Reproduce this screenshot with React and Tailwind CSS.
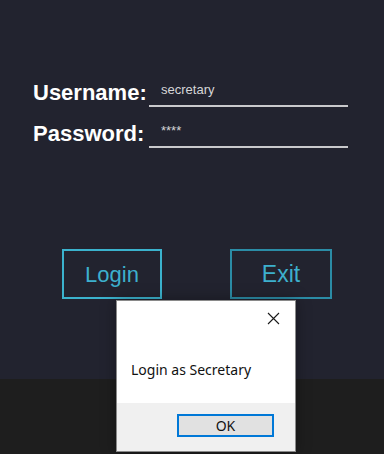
import React from 'react';

const LABEL = "font-['Liberation_Sans',Arial,sans-serif]";

function Field({ label, value }) {
  return (
    <div className="flex items-end">
      <div className={`w-[149px] shrink-0 pl-[33px] mb-[3px] text-[22px] leading-[22px] font-bold text-white ${LABEL}`}>
        {label}
      </div>
      <div className="w-[199px] border-b-2 border-[#c9c9cc] pl-[12px] pb-[9px]">
        <span className={`block text-[13px] leading-[13px] text-[#d6d6d8] ${LABEL}`}>{value}</span>
      </div>
    </div>
  );
}

function MessageBox() {
  return (
    <div className="absolute left-[116px] top-[300px] w-[180px] h-[152px] flex flex-col bg-white border border-[#8a8a8a] shadow-[0_0_14px_rgba(0,0,0,0.35)] font-['Noto_Sans',sans-serif]">
      <div className="relative h-[102px]">
        <svg
          className="absolute left-[150px] top-[11px]"
          width="13"
          height="13"
          viewBox="0 0 13 13"
          fill="none"
          stroke="#1a1a1a"
          strokeWidth="1.1"
        >
          <path d="M1 1 L12 12 M12 1 L1 12" />
        </svg>
        <div className="absolute left-[14px] top-[61px] text-[14px] leading-[16px] text-[#111] whitespace-nowrap">
          Login as Secretary
        </div>
      </div>
      <div className="flex-1 bg-[#f0f0f0] flex justify-end pr-[21px] pt-[11px]">
        <button className="w-[97px] h-[23px] border-2 border-[#0078d7] bg-[#e1e1e1] text-[14px] leading-[14px] text-[#111]">
          OK
        </button>
      </div>
    </div>
  );
}

export default function App() {
  return (
    <div className="relative w-[384px] h-[454px] bg-[#1e1e1e] overflow-hidden">
      <div className="h-[379px] bg-[#22232f] pt-[82px]">
        <div className="flex flex-col gap-[16px]">
          <Field label="Username:" value="secretary" />
          <Field label="Password:" value="****" />
        </div>

        <div className="flex pl-[62px] gap-[68px] mt-[101px]">
          <button className={`w-[100px] h-[50px] border-2 border-[#3bb2cd] text-[22px] text-[#3db0cd] ${LABEL}`}>
            Login
          </button>
          <button className={`w-[102px] h-[50px] border-2 border-[#2b8ca6] text-[23px] text-[#3db0cd] ${LABEL}`}>
            Exit
          </button>
        </div>
      </div>

      <MessageBox />
    </div>
  );
}
